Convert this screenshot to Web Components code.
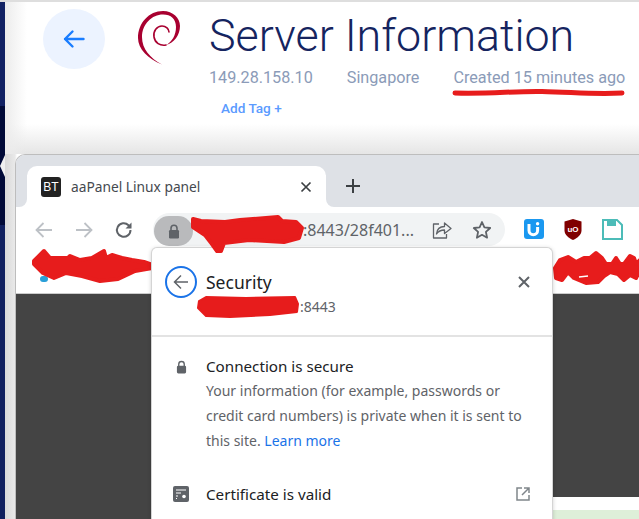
<!DOCTYPE html>
<html>
<head>
<meta charset="utf-8">
<title>Server Information</title>
<style>
  html, body { margin: 0; padding: 0; height: 519px; overflow: hidden; background: #fff; }
  body { position: relative; }
</style>
</head>
<body>
<app-shell>
  <server-header></server-header>
  <browser-window></browser-window>
</app-shell>
<script>
class AppShell extends HTMLElement {
  constructor() {
    super();
    this.attachShadow({mode: "open"});
  }
  connectedCallback() {
    this.shadowRoot.innerHTML = `
    <style>
      :host { display: grid; grid-template-columns: 5px 1fr; height: 519px; overflow: hidden; }
      .strip { display: flex; flex-direction: column; }
      .strip div:nth-child(1) { height: 2px; background: #dcdcdc; }
      .strip div:nth-child(2) { height: 104px; background: #122264; }
      .strip div:nth-child(3) { height: 119px; background: #010a38; }
      .strip div:nth-child(4) { flex: 1; background: #10205f; }
      .main { min-width: 0; display: flex; flex-direction: column; background: linear-gradient(90deg, #d9d9d9, #e9e9e9 10px, #fff 12px); }
      .notch { position: absolute; left: 0; top: 155px; width: 5px; height: 22px; background: #f0f0f0;
        clip-path: polygon(100% 0, 0 50%, 100% 100%); }
    </style>
    <div class="strip"><div></div><div></div><div></div><div></div></div>
    <div class="main"><slot></slot></div>
    <div class="notch"></div>`;
  }
}
customElements.define("app-shell", AppShell);

class ServerHeader extends HTMLElement {
  constructor() {
    super();
    this.attachShadow({mode: "open"});
  }
  connectedCallback() {
    this.shadowRoot.innerHTML = `
    <style>
      :host { display: block; height: 154px; box-sizing: border-box; border-top: 2px solid #dedede;
        background: linear-gradient(90deg, #ececec 0, rgba(255,255,255,0) 22px), linear-gradient(#fff 0, #fff 122px, #e6e6e6 151px);
        font-family: Roboto, "Liberation Sans", sans-serif; position: relative; }
      .row { display: flex; padding-left: 38px; }
      .back { width: 62px; height: 60px; margin-top: 7px; border-radius: 50%; background: #ecf3ff;
        display: flex; align-items: center; justify-content: center; flex: none; }
      .logo { flex: none; margin-left: 33px; margin-top: 9px; width: 46px; height: 56px; }
      .info { margin-left: 25px; }
      h1 { margin: 0; padding-top: 8px; font-weight: 300; font-size: 44.8px; line-height: 52px; color: #15245f; white-space: nowrap; }
      .meta { display: flex; margin-top: 6px; font-size: 16.2px; line-height: 20px; color: #8b9bb8; white-space: nowrap; position: relative; }
      .meta span:nth-child(2) { margin-left: 34px; }
      .meta span:nth-child(3) { margin-left: 34px; }
      .tag { margin: 11px 0 0 12px; font-size: 13.6px; font-weight: 500; line-height: 18px; color: #5b9bff; }
      .mark { position: absolute; left: 447px; top: 86px; }
    </style>
    <div class="row">
      <div class="back">
        <svg width="24" height="24" viewBox="0 0 24 24" fill="none" stroke="#1a7dff" stroke-width="2.400" stroke-linecap="round" stroke-linejoin="round"><path d="M21.500 12H3M10.500 4.500L3 12l7.500 7.500"/></svg>
      </div>
      <svg class="logo" viewBox="0 0 46 56" fill="none">
        <path d="M24 53.500C10 48 0 38 0 27 0 12 11 0 25 0c10 0 17 7 17 15 0 9-6 17-14 19 6-3 10-10 10-18 0-8-5-12.500-13-12.500C14 3.500 4 13 4 26c0 12 8 21 20 27.500z" fill="#a80030"/>
        <path d="M28 34c-6 1-11-2-12-8-1-6 3-11 8-11 4 0 7 3 7 6" stroke="#a80030" stroke-width="1.600" stroke-linecap="round"/>
      </svg>
      <div class="info">
        <h1>Server Information</h1>
        <div class="meta"><span>149.28.158.10</span><span>Singapore</span><span>Created 15 minutes ago</span></div>
        <div class="tag">Add Tag +</div>
      </div>
    </div>
    <svg class="mark" width="176" height="12" viewBox="0 0 176 12" fill="none"><path d="M3 5C40 6 60 3 90 3.500s50 3 80 1.500" stroke="#e71c1c" stroke-width="5" stroke-linecap="round"/></svg>`;
  }
}
customElements.define("server-header", ServerHeader);

class BrowserWindow extends HTMLElement {
  constructor() {
    super();
    this.attachShadow({mode: "open"});
  }
  connectedCallback() {
    this.shadowRoot.innerHTML = `
    <style>
      :host { display: block; flex: 1; margin-left: 10px; background: #fff; position: relative;
        border: 1px solid #bdbdbd; border-width: 1px 0 0 1px; border-top-left-radius: 10px; }
      .wrap { height: 100%; display: flex; flex-direction: column; border-top-left-radius: 9px; overflow: hidden; }
      .content { height: 203px; background: #444; flex: none; }
      .rest { flex: 1; display: flex; background: #fff; }
      .rest .dark { width: 135px; background: #444; flex: none; }
      .rest .light { flex: 1; padding-top: 13px; }
      .green { height: 20px; background: #deefd9; }
    </style>
    <div class="wrap">
      <tab-strip></tab-strip>
      <nav-toolbar></nav-toolbar>
      <bookmark-bar></bookmark-bar>
      <div class="content"></div>
      <div class="rest"><div class="dark"></div><div class="light"><div class="green"></div></div></div>
    </div>
    <security-popup></security-popup>`;
  }
}
customElements.define("browser-window", BrowserWindow);

class TabStrip extends HTMLElement {
  constructor() {
    super();
    this.attachShadow({mode: "open"});
  }
  connectedCallback() {
    this.shadowRoot.innerHTML = `
    <style>
      :host { display: flex; flex: none; height: 53px; box-sizing: border-box; background: linear-gradient(#dee1e6 20px, #fff 20px);
        font-family: "Noto Sans", "Open Sans", sans-serif; }
      .l { width: 11px; flex: none; background: #dee1e6; border-radius: 0 0 8px 0; margin-bottom: 1px; }
      .r { flex: 1; background: #dee1e6; border-radius: 0 0 0 8px; margin-bottom: 1px; display: flex; align-items: center; padding: 9px 0 0 19px; }
      .tab { width: 299px; margin-top: 11px; box-sizing: border-box; background: #fff; border-radius: 10px 10px 0 0;
        display: flex; align-items: center; padding: 0 14px 0 14px; }
      .fav { width: 20px; height: 20px; border-radius: 3px; background: #222; color: #fff; font: 12px "Liberation Sans", sans-serif;
        display: flex; align-items: center; justify-content: center; flex: none; }
      .title { margin: 0 0 2px 10px; font-size: 13.75px; color: #45494f; flex: 1; white-space: nowrap; }
    </style>
    <div class="l"></div>
    <div class="tab">
      <div class="fav">BT</div>
      <div class="title">aaPanel Linux panel</div>
      <svg width="12" height="12" viewBox="0 0 12 12" stroke="#3c4043" stroke-width="1.700" fill="none"><path d="M1.500 1.500l9 9M10.500 1.500l-9 9"/></svg>
    </div>
    <div class="r"><svg width="16" height="16" viewBox="0 0 16 16" stroke="#3c4043" stroke-width="2" fill="none"><path d="M8 1v14M1 8h14"/></svg></div>`;
  }
}
customElements.define("tab-strip", TabStrip);

class NavToolbar extends HTMLElement {
  constructor() {
    super();
    this.attachShadow({mode: "open"});
  }
  connectedCallback() {
    this.shadowRoot.innerHTML = `
    <style>
      :host { display: flex; flex: none; align-items: flex-start; height: 42px; box-sizing: border-box; padding: 5px 0 0 18px; background: #fff;
        font-family: "Noto Sans", "Open Sans", sans-serif; position: relative; }
      .nav { display: flex; gap: 20px; align-items: center; height: 33px; }
      .omni { margin-left: 19px; width: 352px; height: 33px; box-sizing: border-box; flex: none; border-radius: 17px; background: #f1f3f4;
        display: flex; align-items: center; position: relative; }
      .lock { width: 39px; height: 30px; margin: 3px 0 0 1px; background: #b9babc; border-radius: 15px; display: flex; align-items: center; justify-content: center; flex: none; }
      .url { margin-left: 110px; font-size: 16px; color: #5f6368; white-space: nowrap; width: 119px; flex: none; }
      .share { margin-left: 10px; flex: none; }
      .star { margin-left: 20px; flex: none; }
      .ext { display: flex; gap: 19px; margin: 6px 0 0 19px; }
      .scrib { position: absolute; left: 174px; top: 0; z-index: 1; }
    </style>
    <div class="nav">
      <svg width="20" height="20" viewBox="0 0 20 20" fill="none" stroke="#bdc1c6" stroke-width="1.800"><path d="M18 10H2.500M9.500 3l-7 7 7 7"/></svg>
      <svg width="20" height="20" viewBox="0 0 20 20" fill="none" stroke="#bdc1c6" stroke-width="1.800"><path d="M2 10h15.500M10.500 3l7 7-7 7"/></svg>
      <svg width="20" height="20" viewBox="0 0 20 20" fill="none" stroke="#5f6368" stroke-width="2"><path d="M16.500 10a6.800 6.800 0 1 1-2-4.800L16.500 7.500"/><path d="M17.500 2.500v6h-6z" fill="#5f6368" stroke="none"/></svg>
    </div>
    <div class="omni">
      <div class="lock"><svg width="12" height="15" viewBox="0 0 12 15"><path d="M3 6V4.200a3 3 0 0 1 6 0V6" fill="none" stroke="#5f6368" stroke-width="1.600"/><rect x="1" y="6" width="10" height="8.500" rx="1.200" fill="#5f6368"/></svg></div>
      <div class="url">:8443/28f401...</div>
      <svg class="share" width="20" height="20" viewBox="0 0 20 20" fill="none" stroke="#5f6368" stroke-width="1.300" stroke-linejoin="round"><path d="M7 4H1.500v14h13v-4"/><path d="M4.500 14c.5-5 4-7.500 8-7.500V3l6.500 5.500-6.500 5V10c-3.500 0-6 1-8 4z"/></svg>
      <svg class="star" width="20" height="20" viewBox="0 0 20 20" fill="none" stroke="#5f6368" stroke-width="1.800" stroke-linejoin="round"><path d="M10 2l2.400 5.400 5.800.6-4.300 3.900 1.200 5.800L10 14.800l-5.100 2.900 1.200-5.800L1.800 8l5.800-.6z"/></svg>
    </div>
    <div class="ext">
      <svg width="20" height="20" viewBox="0 0 20 20"><rect width="20" height="20" rx="3" fill="#1a98f0"/><path d="M5 5v6.500a4.300 4.300 0 0 0 8.600 0V8" fill="none" stroke="#fff" stroke-width="3"/><circle cx="13.600" cy="4.800" r="1.700" fill="#fff"/></svg>
      <svg width="20" height="21" viewBox="0 0 20 21"><path d="M10 0l8.500 2.500v9c0 4-4 7.500-8.500 9.500-4.500-2-8.500-5.500-8.500-9.500v-9z" fill="#800000"/><text x="10" y="13" text-anchor="middle" font-family="Liberation Sans" font-size="8" font-weight="700" fill="#fff">uO</text></svg>
      <svg width="21" height="21" viewBox="0 0 21 21"><path d="M1 1h14l5 5v14H1z" fill="none" stroke="#4cbcb8" stroke-width="2"/><path d="M5 2h9v5H5z" fill="#4cbcb8"/></svg>
    </div>
    <svg class="scrib" width="118" height="46" viewBox="0 0 118 46" fill="#e71c1c" stroke="#e71c1c" stroke-linecap="round" stroke-linejoin="round" stroke-width="4">
      <path d="M3 11l8 2 24 1 15-2 38-3 4 4 14 1 6 6-3 10-15 4-35-2-25 3-3 8h-4l-5-7-7-9-12-8z"/>
    </svg>`;
  }
}
customElements.define("nav-toolbar", NavToolbar);

class BookmarkBar extends HTMLElement {
  constructor() {
    super();
    this.attachShadow({mode: "open"});
  }
  connectedCallback() {
    this.shadowRoot.innerHTML = `
    <style>
      :host { display: block; flex: none; height: 44px; box-sizing: border-box; background: #fff; position: relative; border-bottom: 1px solid #ccc; }
      .dot { position: absolute; left: 24px; top: 26px; width: 8px; height: 6px; border-radius: 3px; background: #2a9fd8; }
      .a { position: absolute; left: 14px; top: -2px; }
      .b { position: absolute; left: 532px; top: 0; }
      .tiny { position: absolute; left: 618px; top: 20px; width: 6px; height: 5px; border: 1px solid #3a3f7a; border-right: 0; }
    </style>
    <div class="dot"></div>
    <div class="tiny"></div>
    <svg class="a" width="145" height="38" viewBox="0 0 145 38" fill="#e71c1c" stroke="#e71c1c" stroke-linejoin="round" stroke-width="4">
      <path d="M4 13L14 3l6 7h18l2-2 10 4 12-2 12-7 2 7 6-3 10 3 10 2 12 2 14 5-23 4-17 8-18 2-18-5-16-3-12 5-11-5-9-9z"/>
    </svg>
    <svg class="b" width="96" height="38" viewBox="0 0 96 38" fill="#e71c1c" stroke="#e71c1c" stroke-linejoin="round" stroke-width="4">
      <path d="M7 18l5-8 8-3 8 5 8-4h6l6-5 6 5 4 6h6l4-6 4 6h4l6-8 4 2 2 6 6-6 4 5 1 5-7 2-4 8-6-3-6 5-6-6-8-2-6 4-6 6-12 1-12-5-6-6-6 8-6-2z"/>
      <path d="M31 27l9-1" stroke="#fff" stroke-width="1.500" fill="none"/>
    </svg>`;
  }
}
customElements.define("bookmark-bar", BookmarkBar);

class SecurityPopup extends HTMLElement {
  constructor() {
    super();
    this.attachShadow({mode: "open"});
  }
  connectedCallback() {
    this.shadowRoot.innerHTML = `
    <style>
      :host { display: block; position: absolute; left: 135px; top: 92px; width: 402px; height: 290px; box-sizing: border-box;
        background: #fff; border: 1px solid #d4d4d4; border-bottom: 0; border-radius: 6px 6px 0 0; box-shadow: 0 1px 4px rgba(0,0,0,.18);
        font-family: "Noto Sans", "Open Sans", sans-serif; color: #202124; }
      .head { height: 89px; box-sizing: border-box; border-bottom: 2px solid #e3e3e3; display: flex; padding: 18px 22px 0 13px; }
      .back { width: 32px; height: 32px; border-radius: 50%; border: 2px solid #1a73e8; box-sizing: border-box; flex: none; display: flex; align-items: center; justify-content: center; }
      .h { margin-left: 9px; flex: 1; position: relative; }
      .h b { display: block; font-weight: 400; font-size: 17.5px; line-height: 24px; margin-top: 4px; }
      .h i { display: block; font-style: normal; font-size: 14px; line-height: 20px; margin: 3px 0 0 94px; color: #5f6368; }
      .x { flex: none; margin-top: 10px; }
      .scrib { position: absolute; left: -10px; top: 30px; }
      .sec { display: flex; padding: 18px 0 0 24px; }
      .ic { width: 30px; flex: none; }
      .ic svg { display: block; margin-top: 5px; }
      .t1 { font-size: 15.2px; line-height: 23px; }
      .p { font-size: 14px; line-height: 25px; color: #5f6368; width: 330px; }
      .p a { color: #1a73e8; text-decoration: none; }
      .cert { display: flex; align-items: center; padding: 30px 22px 0 21px; font-size: 15.2px; line-height: 22px; }
      .cert .ic { width: 33px; }
      .cert .ic svg { margin: 0; }
      .cert span { flex: 1; }
    </style>
    <div class="head">
      <div class="back"><svg width="18" height="18" viewBox="0 0 18 18" fill="none" stroke="#5f6368" stroke-width="1.500"><path d="M16 9H2.500M9 2.500L2.500 9 9 15.500"/></svg></div>
      <div class="h">
        <b>Security</b>
        <i>:8443</i>
        <svg class="scrib" width="104" height="22" viewBox="0 0 104 22" fill="#e71c1c" stroke="#e71c1c" stroke-width="2" stroke-linejoin="round"><path d="M3 5l7-4 40 1 49-1 3 7-1 8-27 3-40 2-24-1-8-8z"/></svg>
      </div>
      <svg class="x" width="12" height="12" viewBox="0 0 12 12" stroke="#5f6368" stroke-width="2" fill="none"><path d="M1 1l10 10M11 1L1 11"/></svg>
    </div>
    <div class="sec">
      <div class="ic"><svg width="11" height="14" viewBox="0 0 12 14"><path d="M3 6V4a3 3 0 0 1 6 0v2" fill="none" stroke="#5f6368" stroke-width="1.500"/><rect x="1" y="5.500" width="10" height="8.500" rx="1.500" fill="#5f6368"/></svg></div>
      <div>
        <div class="t1">Connection is secure</div>
        <div class="p">Your information (for example, passwords or<br>credit card numbers) is private when it is sent to<br>this site. <a>Learn more</a></div>
      </div>
    </div>
    <div class="cert">
      <div class="ic"><svg width="16" height="16" viewBox="0 0 16 16"><rect width="16" height="16" rx="2" fill="#5f6368"/><path d="M3 4h10M3 7h5M3 10h2M3 12.500h1" stroke="#fff" stroke-width="1.200"/><circle cx="11" cy="10.500" r="1.800" fill="#fff"/></svg></div>
      <span>Certificate is valid</span>
      <svg width="14" height="14" viewBox="0 0 14 14" fill="none" stroke="#80868b" stroke-width="1.500"><path d="M6 1H1v12h12V8M8 1h5v5M13 1L6 8"/></svg>
    </div>`;
  }
}
customElements.define("security-popup", SecurityPopup);
</script>
</body>
</html>
